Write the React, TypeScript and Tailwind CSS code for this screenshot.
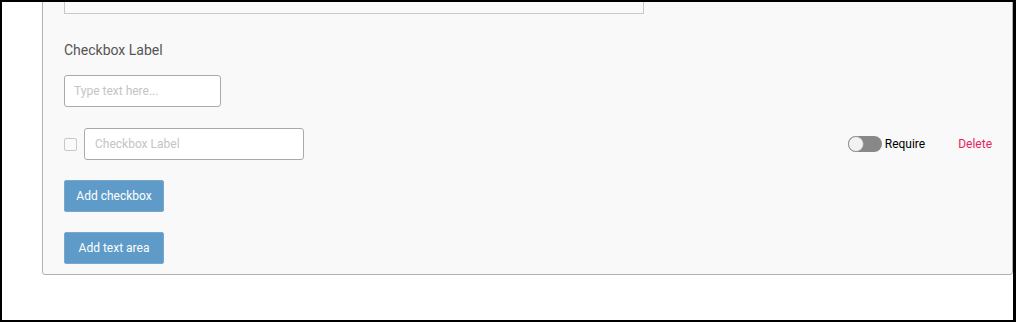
import React from "react";

export default function App() {
  return (
    <div
      className="w-[1016px] h-[322px] box-border overflow-hidden bg-white border-t-2 border-l-2 border-b-2 border-r-[3px] border-black"
      style={{ fontFamily: "Roboto, 'Liberation Sans', sans-serif" }}
    >
      <div className="pl-[40px]">
        <div className="-mt-[50px] bg-[#f9f9f9] border border-[#b0b0b0] rounded-b-[3px] pt-[20px] pb-[10px] pl-[21px] pr-[20px]">
          <div className="w-[580px] h-[41px] border border-[#c8c8c8] bg-[#fafafa]" />
          <div className="mt-[26px] text-[14px] leading-[20px] text-[#555]">Checkbox Label</div>
          <input
            className="mt-[15px] block w-[157px] h-[32px] box-border border border-[#aaa] rounded-[3px] bg-white px-[9px] text-[12px] outline-none placeholder:text-[#c4c4c4]"
            placeholder="Type text here..."
          />
          <div className="mt-[21px] flex items-center h-[32px]">
            <span className="w-[13px] h-[13px] rounded-[2px] border border-[#c8c8c8] bg-[#fafafa] box-border" />
            <input
              className="ml-[7px] block w-[220px] h-[32px] box-border border border-[#aaa] rounded-[3px] bg-white px-[10px] text-[12px] outline-none placeholder:text-[#c4c4c4]"
              placeholder="Checkbox Label"
            />
            <div className="ml-auto flex items-center">
              <span className="relative w-[34px] h-[16px] rounded-full bg-[#888] inline-block">
                <span className="absolute left-0 top-0 w-[16px] h-[16px] rounded-full bg-[#f2f2f2] border border-[#999] box-border" />
              </span>
              <span className="ml-[3px] text-[12px] text-black">Require</span>
              <span className="ml-[33px] text-[12px] text-[#e8245a]">Delete</span>
            </div>
          </div>
          <button className="mt-[20px] block w-[100px] h-[32px] rounded-[2px] bg-[#5e9bc8] border border-[#7aa8cc] text-white text-[12px]">
            Add checkbox
          </button>
          <button className="mt-[20px] block w-[100px] h-[32px] rounded-[2px] bg-[#5e9bc8] border border-[#7aa8cc] text-white text-[12px]">
            Add text area
          </button>
        </div>
      </div>
    </div>
  );
}
